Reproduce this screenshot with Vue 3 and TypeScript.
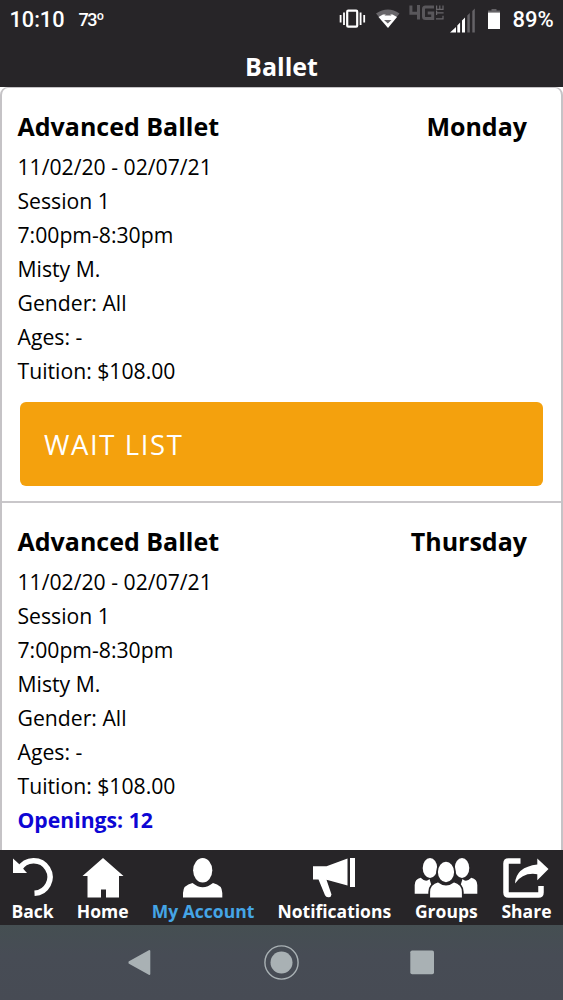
<script setup lang="ts">
interface DanceClass {
  title: string
  day: string
  details: string[]
  waitList?: boolean
  openings?: number
}

interface Tab {
  label: string
  icon: string
  width: number
  active?: boolean
}

const common = [
  '11/02/20 - 02/07/21',
  'Session 1',
  '7:00pm-8:30pm',
  'Misty M.',
  'Gender: All',
  'Ages: -',
  'Tuition: $108.00',
]

const classes: DanceClass[] = [
  { title: 'Advanced Ballet', day: 'Monday', details: common, waitList: true },
  { title: 'Advanced Ballet', day: 'Thursday', details: common, openings: 12 },
]

const tabs: Tab[] = [
  { label: 'Back', icon: 'back', width: 42 },
  { label: 'Home', icon: 'home', width: 42 },
  { label: 'My Account', icon: 'account', width: 42, active: true },
  { label: 'Notifications', icon: 'notifications', width: 44 },
  { label: 'Groups', icon: 'groups', width: 64 },
  { label: 'Share', icon: 'share', width: 48 },
]
</script>

<template>
  <div class="screen">
    <div class="status">
      <span class="clock">10:10</span>
      <span class="temp">73º</span>
      <svg class="indicators" width="166" height="40" viewBox="337 0 166 40">
        <g fill="none" stroke="#fff">
          <rect x="347.2" y="10.700" width="10" height="16" rx="1" stroke-width="2.200" />
          <path d="M344 12.500v12.500M360.600 12.500v12.500" stroke-width="1.800" />
          <path d="M340.600 15v7.500M364.200 15v7.500" stroke-width="1.800" />
        </g>
        <path d="M376 13.500Q388 5.500 399.500 13.500L395 19Q388 14 380.500 19Z" fill="#68666a" />
        <path d="M378.500 17L383 14.500H392.500L397 17L388 28Z" fill="#fff" />
        <path d="M384 20h7.500l-3.700 3.500zM384.500 15.500l3.500-3.500 3.500 3.500z" fill="#68666a" />
        <g fill="none" stroke="#59575b" stroke-width="3">
          <path d="M410.900 5.500v7.800h7.500M418.500 5v14.500" />
          <path d="M434 7h-8.500q-2 0-2 2v7.500q0 2 2 2h7.200v-5.500h-5" />
        </g>
        <g fill="none" stroke="#68666a" stroke-width="1.200">
          <path d="M436.600 5.500v3.800h6.400V5.500M439.800 5.500v3.800M436.600 10.500v4.500M436.600 12.800h7M436 18.800h7V15.800" />
        </g>
        <path d="M450 32.500L456 27v5.500zM457.300 25.500l2.800-3v10h-2.800zM462 20.500l3-3v15h-3z" fill="#fff" />
        <path d="M467.300 15.500l2.500-2.500v19.500h-2.500zM472.300 11l2.500-2.500v24h-2.500z" fill="#656367" />
        <path d="M491.500 9h5v1.500h3.500v2h-12v-2h3.500z" fill="#656367" />
        <path d="M488 12.500h12V29h-12z" fill="#fff" />
      </svg>
      <span class="battery">89%</span>
    </div>
    <header class="header"><h1>Ballet</h1></header>

    <main class="content">
      <div class="list">
        <section v-for="item in classes" :key="item.day" class="card">
          <div class="heading">
            <h2>{{ item.title }}</h2>
            <h2>{{ item.day }}</h2>
          </div>
          <p v-for="line in item.details" :key="line" class="line">{{ line }}</p>
          <p v-if="item.openings" class="line openings">Openings: {{ item.openings }}</p>
          <button v-if="item.waitList" class="wait" type="button">WAIT LIST</button>
        </section>
      </div>
    </main>

    <nav class="tabs">
      <a v-for="tab in tabs" :key="tab.label" class="tab" :class="[tab.icon, { active: tab.active }]">
        <svg :width="tab.width" height="42" :viewBox="`0 0 ${tab.width} 42`" fill="#fff">
          <template v-if="tab.icon === 'back'">
            <path d="M1 1.500l5.500 5 8.500 9.500H1z" />
            <path d="M7.500 12A16.300 16.300 0 1 1 22.500 36.300" fill="none" stroke="#fff" stroke-width="5.500" />
          </template>
          <path
            v-else-if="tab.icon === 'home'"
            d="M21 1L41.500 19h-4.500v21.500H24V32.500h-5v8H5.500V19H.5z"
          />
          <template v-else-if="tab.icon === 'account'">
            <ellipse cx="20.700" cy="13.300" rx="9.600" ry="12.200" />
            <path d="M1 40.500V36Q1 28 10.500 26Q20.700 34.500 31 26Q40.300 28 40.300 36v4.500z" />
          </template>
          <template v-else-if="tab.icon === 'notifications'">
            <path d="M1 9.200h13.500L35.500 1.500v27L14.500 22.800l5 14.600q-.2 2.600-3 2.900-2.400.2-3.500-2L6.500 22.500H1z" />
            <path d="M38 1h5v29h-5z" />
          </template>
          <template v-else-if="tab.icon === 'groups'">
            <ellipse cx="16" cy="11" rx="7.300" ry="10" />
            <ellipse cx="48" cy="11" rx="7.300" ry="10" />
            <path d="M.700 36.700V28q0-6 6-7.300Q12 26 15.500 22L20 36.700zM63.300 36.700V28q0-6-6-7.300Q52 26 48.500 22L44 36.700z" />
            <g stroke="#272528" stroke-width="1.800">
              <ellipse cx="32" cy="15" rx="9" ry="11.200" />
              <path d="M15.200 41.400V35q0-8 9-10.500Q32 30.500 39.800 24.500q9 2.500 9 10.500v6.400z" />
            </g>
          </template>
          <template v-else>
            <path d="M18.500 4H6.500Q4 4 4 6.500v29Q4 38 6.500 38h30q2.500 0 2.500-2.500V29" fill="none" stroke="#fff" stroke-width="5.500" />
            <path d="M35.300 1.500L46.500 12 35.300 23.200v-6Q21 15 13 26.500 14 10 35.300 7.500z" />
          </template>
        </svg>
        <span>{{ tab.label }}</span>
      </a>
    </nav>

    <div class="system">
      <svg width="563" height="75" viewBox="0 0 563 75">
        <path d="M129.500 37.200L149.300 26V49L129.500 38z" fill="#a9b1b4" stroke="#a9b1b4" stroke-width="2" stroke-linejoin="round" />
        <circle cx="281.500" cy="37.500" r="16.600" fill="none" stroke="#a9b1b4" stroke-width="1.400" />
        <circle cx="281.500" cy="37.500" r="11" fill="#a9b1b4" />
        <rect x="410.300" y="25.500" width="23.700" height="23.700" rx="1.800" fill="#a9b1b4" />
      </svg>
    </div>
  </div>
</template>

<style>
body {
  margin: 0;
}
</style>

<style scoped>
.screen {
  width: 563px;
  height: 1000px;
  display: flex;
  flex-direction: column;
  overflow: hidden;
  background: #fff;
  font-family: 'Open Sans', 'Noto Sans', sans-serif;
  color: #000;
}
.status {
  height: 40px;
  flex: none;
  display: flex;
  box-sizing: border-box;
  padding-left: 9.500px;
  background: #272528;
  color: #fff;
  font-family: Roboto, sans-serif;
  font-weight: 500;
  line-height: 40px;
}
.clock {
  width: 69px;
  font-size: 21.700px;
}
.temp {
  width: 258.500px;
  font-size: 18px;
  letter-spacing: -1.400px;
}
.indicators {
  flex: none;
  margin-right: 9.500px;
}
.battery {
  font-size: 22px;
}
.header {
  height: 47px;
  flex: none;
  background: #272528;
  color: #fff;
  text-align: center;
}
h1,
h2,
p {
  margin: 0;
}
h1 {
  font-size: 25px;
  line-height: 53px;
  font-weight: 700;
}
.content {
  height: 763px;
  flex: none;
  overflow: hidden;
}
.list {
  box-sizing: border-box;
  min-height: 800px;
  border: 1px solid #c5c3c6;
  border-width: 1px 2px;
  border-radius: 8px;
}
.card {
  height: 413px;
  padding: 0 15.500px;
  border-bottom: 2px solid #c9c7ca;
}
.heading {
  display: flex;
  justify-content: space-between;
  padding: 20px 18.500px 0 0;
  height: 42px;
}
h2 {
  font-size: 25px;
  line-height: 37px;
  font-weight: 700;
}
.card + .card h2 {
  line-height: 36px;
}
.line {
  font-size: 21.200px;
  line-height: 34px;
}
.openings {
  color: #0d06d4;
  font-weight: 700;
}
.wait {
  display: block;
  width: 523px;
  height: 84px;
  margin: 14px 0 0 2.500px;
  padding: 0 24px;
  border: 0;
  border-radius: 6px;
  background: #f4a10d;
  color: #fff;
  font: 400 27.500px 'Open Sans', sans-serif;
  letter-spacing: 1.600px;
  text-align: left;
}
.tabs {
  height: 75px;
  flex: none;
  box-sizing: border-box;
  display: flex;
  justify-content: space-between;
  padding: 7px 11.500px 0;
  background: #272528;
}
.tab {
  display: flex;
  flex-direction: column;
  align-items: center;
  color: #fff;
  font-size: 17.500px;
  font-weight: 700;
  line-height: 25px;
}
.tab svg {
  flex: none;
}
.active {
  color: #45a5e6;
}
.system {
  height: 75px;
  flex: none;
  background: linear-gradient(#454f52, #474c55 40%, #474b54);
}
.system svg {
  display: block;
}
</style>
